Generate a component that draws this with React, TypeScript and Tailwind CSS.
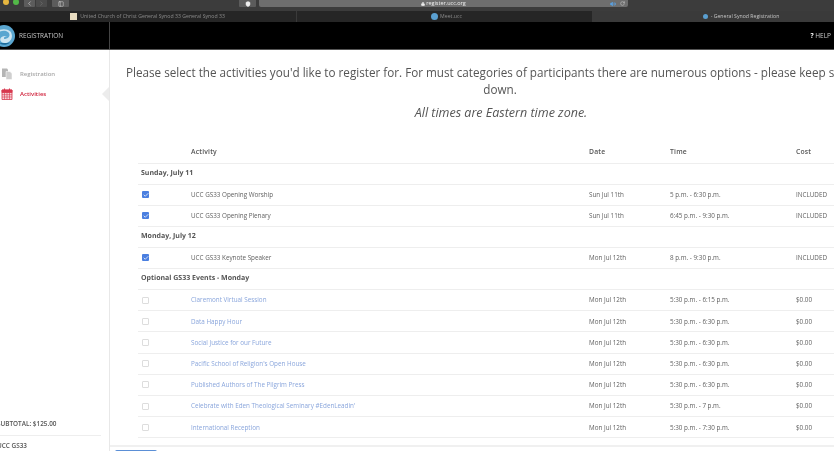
import { Check, ChevronLeft, ChevronRight, Lock, PanelLeft, RotateCw, Shield, Volume2 } from "lucide-react";

type Row =
  | { group: string }
  | { name: string; date: string; time: string; cost: string; checked?: boolean };

const rows: Row[] = [
  { group: "Sunday, July 11" },
  { name: "UCC GS33 Opening Worship", date: "Sun Jul 11th", time: "5 p.m. - 6:30 p.m.", cost: "INCLUDED", checked: true },
  { name: "UCC GS33 Opening Plenary", date: "Sun Jul 11th", time: "6:45 p.m. - 9:30 p.m.", cost: "INCLUDED", checked: true },
  { group: "Monday, July 12" },
  { name: "UCC GS33 Keynote Speaker", date: "Mon Jul 12th", time: "8 p.m. - 9:30 p.m.", cost: "INCLUDED", checked: true },
  { group: "Optional GS33 Events - Monday" },
  { name: "Claremont Virtual Session", date: "Mon Jul 12th", time: "5:30 p.m. - 6:15 p.m.", cost: "$0.00" },
  { name: "Data Happy Hour", date: "Mon Jul 12th", time: "5:30 p.m. - 6:30 p.m.", cost: "$0.00" },
  { name: "Social Justice for our Future", date: "Mon Jul 12th", time: "5:30 p.m. - 6:30 p.m.", cost: "$0.00" },
  { name: "Pacific School of Religion's Open House", date: "Mon Jul 12th", time: "5:30 p.m. - 6:30 p.m.", cost: "$0.00" },
  { name: "Published Authors of The Pilgrim Press", date: "Mon Jul 12th", time: "5:30 p.m. - 6:30 p.m.", cost: "$0.00" },
  { name: "Celebrate with Eden Theological Seminary #EdenLeadin'", date: "Mon Jul 12th", time: "5:30 p.m. - 7 p.m.", cost: "$0.00" },
  { name: "International Reception", date: "Mon Jul 12th", time: "5:30 p.m. - 7:30 p.m.", cost: "$0.00" },
];

function Logo() {
  return (
    <svg viewBox="0 0 24 24" className="w-[22px] h-[22px] shrink-0 ml-[-7px]">
      <circle cx="12" cy="12" r="12" fill="#5aa6d0" />
      <path d="M1 12C3 5 13 2 19 7c3 4 2 10-3 12-5 2-9-1-8-4 1-3 6-4 8-2-3-1-4 0-4 2 2 1 6-1 6-4 0-6-11-7-17 1z" fill="#cfe6f1" />
      <path d="M6 19c3 3 8 4 13 0-5 1-9 1-13 0z" fill="#1d6c9c" />
    </svg>
  );
}

function DocsIcon() {
  return (
    <svg viewBox="0 0 12 12" className="w-[12px] h-[12px] shrink-0">
      <path d="M1 0.5h5l1 1v7.5H1z" fill="#b5b5b5" />
      <path d="M5 3.5h4l2 2v6H5z" fill="#cfcfcf" stroke="#fff" strokeWidth="0.5" />
    </svg>
  );
}

function CalendarIcon() {
  return (
    <svg viewBox="0 0 12 12" className="w-[12px] h-[12px] shrink-0" fill="none" stroke="#d8394f" strokeWidth="0.8">
      <path d="M1 2h10v9.5H1z" fill="#f6d5da" />
      <path d="M1 2h10v2.5H1z" fill="#d8394f" />
      <path d="M3.5 0.5v2M8.5 0.5v2" strokeWidth="1.1" />
      <path d="M1 6.7h10M1 9h10M3.5 4.5v7M6 4.5v7M8.5 4.5v7" strokeWidth="0.6" />
    </svg>
  );
}

export default function App() {
  return (
    <div className="w-[834px] h-[451px] overflow-hidden bg-white font-['Open_Sans',sans-serif] blur-[0.5px]">
      {/* Browser chrome */}
      <div className="h-[11px] bg-[#3c3c3c] flex items-start relative">
        <div className="flex items-center gap-[4px] ml-[3px] mt-[-1px]">
          <span className="w-[6px] h-[6px] rounded-full bg-[#e6b63f]" />
          <span className="w-[6px] h-[6px] rounded-full bg-[#52b848]" />
        </div>
        <div className="flex items-center gap-[1px] ml-[5px]">
          <span className="w-[11px] h-[7px] bg-[#5c5c5c] rounded-b-[1px] flex items-center justify-center">
            <ChevronLeft size={7} color="#ddd" />
          </span>
          <span className="w-[11px] h-[7px] bg-[#4c4c4c] rounded-b-[1px] flex items-center justify-center">
            <ChevronRight size={7} color="#777" />
          </span>
        </div>
        <span className="w-[17px] h-[7px] ml-[5px] bg-[#5c5c5c] rounded-b-[1px] flex items-center justify-center">
          <PanelLeft size={6} color="#ddd" />
        </span>
        <span className="w-[17px] h-[7px] ml-[170px] bg-[#5c5c5c] rounded-b-[1px] flex items-center justify-center">
          <Shield size={6} color="#eee" fill="#eee" />
        </span>
        <div className="w-[369px] h-[7px] ml-[3px] bg-[#6e6e6e] rounded-b-[2px] flex items-center justify-center relative">
          <Lock size={4} color="#eee" fill="#eee" />
          <span className="text-[5.5px] leading-none text-[#eee] ml-[1px]">register.ucc.org</span>
          <Volume2 size={6} color="#5aa0e0" fill="#5aa0e0" className="absolute right-[12px]" />
          <RotateCw size={5} color="#ddd" className="absolute right-[3px]" />
        </div>
      </div>
      <div className="h-[11px] bg-[#3a3a3a] flex text-[5.2px] leading-none text-[#8b8b8b]">
        <div className="w-[297px] bg-[#262626] border-r border-[#3a3a3a] flex items-center justify-center gap-[3px] pr-[1px]">
          <span className="w-[7px] h-[7px] bg-[#e8dcc0]" />
          <span>United Church of Christ General Synod 33 General Synod 33</span>
        </div>
        <div className="w-[295px] bg-[#262626] flex items-center justify-center gap-[2px] pl-[4px]">
          <span className="w-[7px] h-[7px] rounded-full bg-[#5a9fd0]" />
          <span>Meet.ucc</span>
        </div>
        <div className="flex-1 flex items-center justify-center gap-[3px] text-[#c4c4c4] pl-[56px]">
          <span className="w-[5px] h-[5px] rounded-full bg-[#5a9fd0]" />
          <span>- General Synod Registration</span>
        </div>
      </div>

      {/* App header */}
      <header className="h-[28px] bg-black flex items-center border-b border-[#555]">
        <div className="w-[110px] h-full flex items-center gap-[4px] border-r border-[#444] overflow-hidden">
          <Logo />
          <span className="text-[6.4px] text-[#c9c9c9]">REGISTRATION</span>
        </div>
        <span className="ml-auto mr-[3px] text-[6.5px] text-[#ccc]">
          <b className="text-white">?</b> HELP
        </span>
      </header>

      <div className="flex h-[401px]">
        {/* Sidebar */}
        <aside className="w-[110px] shrink-0 border-r border-[#e8e8e8] flex flex-col relative">
          <nav className="pt-[18px] flex flex-col gap-[8px] text-[6px] font-semibold">
            <div className="flex items-center h-[12px] pl-[1px] gap-[7px] text-[#a8a8a8]">
              <DocsIcon />
              <span>Registration</span>
            </div>
            <div className="flex items-center h-[12px] pl-[1px] gap-[7px] text-[#d0223c]">
              <CalendarIcon />
              <span>Activities</span>
            </div>
          </nav>
          <span className="absolute right-0 top-[37px] border-y-[7px] border-r-[7px] border-y-transparent border-r-[#ececec]" />
          <div className="mt-auto text-[6.4px] text-[#555] font-semibold ml-[-3px]">
            <div className="h-[13px] flex items-center">SUBTOTAL: $125.00</div>
            <div className="w-[104px] border-t border-[#eee] mt-[5px] pt-[6px] leading-[8px] h-[16px]">UCC GS33</div>
          </div>
        </aside>

        {/* Main */}
        <main className="w-[775px] shrink-0 flex flex-col">
          <div className="pt-[14px] px-[4px] text-center text-[#555]">
            <h1 className="pl-[5px] text-[11.7px] leading-[17px]">
              Please select the activities you'd like to register for. For must categories of participants there are numerous options - please keep scrolling down.
            </h1>
            <p className="mt-[6px] pl-[7px] text-[12.5px] leading-[17px] italic">All times are Eastern time zone.</p>
          </div>
          <table className="ml-[28px] mt-[20px] w-[730px] table-fixed border-collapse text-[6.3px] text-[#5f5f5f]">
            <colgroup>
              <col className="w-[53px]" />
              <col className="w-[398px]" />
              <col className="w-[81px]" />
              <col className="w-[126px]" />
              <col />
            </colgroup>
            <thead>
              <tr className="h-[22px] border-b border-[#eee] text-left text-[6.8px] text-[#555]">
                <th></th>
                <th className="font-semibold tracking-[0.2px]">Activity</th>
                <th className="font-semibold tracking-[0.2px]">Date</th>
                <th className="font-semibold tracking-[0.2px]">Time</th>
                <th className="font-semibold tracking-[0.2px]">Cost</th>
              </tr>
            </thead>
            <tbody>
              {rows.map((row, i) =>
                "group" in row ? (
                  <tr key={i} className="h-[21px] border-b border-[#eee]">
                    <td colSpan={5} className="pl-[3px] pt-[1px] text-[7px] font-bold text-[#555] [text-rendering:geometricPrecision]">{row.group}</td>
                  </tr>
                ) : (
                  <tr key={i} className="h-[21.2px] border-b border-[#eee]">
                    <td className="pl-[4px]">
                      {row.checked ? (
                        <span className="w-[7px] h-[7px] rounded-[1px] bg-[#4a7fe0] flex items-center justify-center">
                          <Check size={6} color="#fff" strokeWidth={3} />
                        </span>
                      ) : (
                        <span className="block w-[7px] h-[7px] rounded-[1px] border border-[#ddd] bg-white" />
                      )}
                    </td>
                    <td className={row.checked ? "" : "text-[#8aa6dc]"}>{row.name}</td>
                    <td>{row.date}</td>
                    <td>{row.time}</td>
                    <td>{row.cost}</td>
                  </tr>
                )
              )}
            </tbody>
          </table>
          <div className="mt-[7px] border-t-2 border-[#f0f0f0] pt-[3px] pl-[5px]">
            <div className="w-[42px] h-[10px] bg-[#5b8fd6] rounded-t-[2px]" />
          </div>
        </main>
      </div>
    </div>
  );
}
